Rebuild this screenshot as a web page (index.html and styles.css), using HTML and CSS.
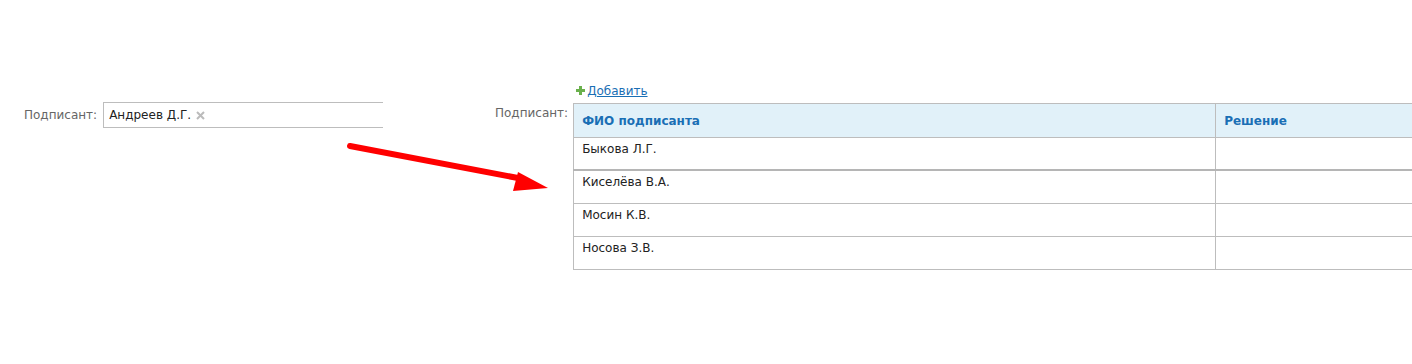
FILE: index.html
```html
<!DOCTYPE html>
<html lang="ru">
<head>
    <meta charset="UTF-8">
    <title>Подписант</title>
    <link rel="stylesheet" href="styles.css">
</head>
<body>
    <div class="page">
        <div class="field field-single">
            <span class="label">Подписант:</span>
            <div class="tag-input">
                <span class="tag">Андреев Д.Г.</span>
                <svg class="tag-remove" width="9" height="9" viewBox="0 0 9 9">
                    <path d="M1 1L8 8M8 1L1 8" stroke="#bbbbbb" stroke-width="2"/>
                </svg>
            </div>
        </div>

        <div class="field field-list">
            <span class="label">Подписант:</span>
            <div class="list-box">
                <a href="#" class="add-link"><svg class="plus" width="9" height="9" viewBox="0 0 9 9">
                    <path d="M4.5 0V9M0 4.5H9" stroke="#6ab04c" stroke-width="3"/>
                </svg>Добавить</a>
                <table class="signers">
                    <thead>
                        <tr>
                            <th class="col-name">ФИО подписанта</th>
                            <th>Решение</th>
                        </tr>
                    </thead>
                    <tbody>
                        <tr class="first"><td>Быкова Л.Г.</td><td></td></tr>
                        <tr><td>Киселёва В.А.</td><td></td></tr>
                        <tr><td>Мосин К.В.</td><td></td></tr>
                        <tr><td>Носова З.В.</td><td></td></tr>
                    </tbody>
                </table>
            </div>
        </div>

        <svg class="arrow" width="220" height="60" viewBox="0 0 220 60">
            <line x1="4" y1="5" x2="172" y2="37" stroke="#ff0000" stroke-width="6" stroke-linecap="round"/>
            <polygon points="172,31 167,50 202,47" fill="#ff0000"/>
        </svg>
    </div>
</body>
</html>
```

FILE: styles.css
```css
body {
    margin: 0;
    background: #ffffff;
    font-family: "DejaVu Sans", Verdana, sans-serif;
    font-size: 12px;
    color: #222;
    overflow: hidden;
}

.page {
    position: relative;
    display: flex;
    align-items: flex-start;
    height: 364px;
}

.field {
    display: flex;
    align-items: flex-start;
    flex-shrink: 0;
}

.label {
    color: #666;
    font-size: 12px;
    flex-shrink: 0;
}

.field-single {
    margin-top: 102px;
    margin-left: 24px;
    width: 359px;
}

.field-single .label {
    padding-top: 6px;
    margin-right: 6px;
}

.tag-input {
    flex: 1;
    height: 24px;
    border: 1px solid #bdbdbd;
    border-right: none;
    display: flex;
    align-items: center;
    padding-left: 5px;
}

.tag {
    color: #222;
}

.tag-remove {
    margin-left: 5px;
}

.field-list {
    margin-left: 112px;
    margin-top: 84px;
}

.field-list .label {
    padding-top: 22px;
    margin-right: 5px;
}

.list-box {
    width: 900px;
    flex-shrink: 0;
}

.add-link {
    display: inline-block;
    color: #1a6fb5;
    text-decoration: underline;
    margin-left: 3px;
    height: 19px;
}

.plus {
    margin-right: 2px;
}

.signers {
    border-collapse: collapse;
    width: 900px;
    border: 1px solid #bdbdbd;
}

.signers th {
    background: #e1f1f9;
    color: #1a6fb5;
    font-weight: bold;
    text-align: left;
    height: 33px;
    padding: 0 8px;
    border: 1px solid #bdbdbd;
}

.signers .col-name {
    width: 625px;
}

.signers td {
    height: 28px;
    padding: 4px 8px 0;
    vertical-align: top;
    border: 1px solid #bdbdbd;
}

.signers tr.first td {
    border-bottom: 2px solid #b5b5b5;
    height: 27px;
}

.arrow {
    position: absolute;
    left: 346px;
    top: 141px;
}
```
